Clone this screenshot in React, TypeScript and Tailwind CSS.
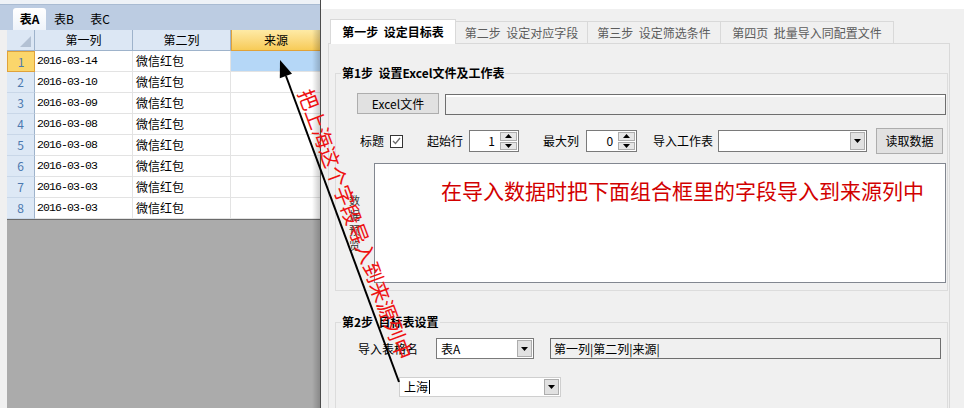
import { Fragment } from "react";

const DATES = [
  "2016-03-14",
  "2016-03-10",
  "2016-03-09",
  "2016-03-08",
  "2016-03-08",
  "2016-03-03",
  "2016-03-03",
  "2016-03-03",
];

function DownArrow() {
  return (
    <svg width="7" height="4" viewBox="0 0 7 4">
      <path d="M0 0h7L3.5 4z" fill="#000" />
    </svg>
  );
}

function UpArrow() {
  return (
    <svg width="7" height="4" viewBox="0 0 7 4">
      <path d="M0 4h7L3.5 0z" fill="#000" />
    </svg>
  );
}

function Combo({
  value,
  caret,
  className,
}: {
  value?: string;
  caret?: boolean;
  className: string;
}) {
  return (
    <div className={`flex shrink-0 bg-white ${className}`}>
      <div className="flex flex-1 items-center pl-[4px]">
        {value}
        {caret && <span className="ml-px h-[14px] w-px bg-black" />}
      </div>
      <div className="my-px mr-px flex w-[15px] items-center justify-center border border-[#adadad] bg-[#e1e1e1]">
        <DownArrow />
      </div>
    </div>
  );
}

function Spinner({ value, className }: { value: string; className: string }) {
  return (
    <div
      className={`flex h-[22px] shrink-0 border border-[#7a7a7a] bg-white ${className}`}
    >
      <div className="flex flex-1 items-center justify-end pr-[5px]">{value}</div>
      <div className="flex w-[18px] flex-col gap-px py-px pr-px">
        <div className="flex flex-1 items-center justify-center border border-[#adadad] bg-[#e6e6e6]">
          <UpArrow />
        </div>
        <div className="flex flex-1 items-center justify-center border border-[#adadad] bg-[#e6e6e6]">
          <DownArrow />
        </div>
      </div>
    </div>
  );
}

function Checkbox({ className }: { className: string }) {
  return (
    <div
      className={`flex h-[13px] w-[13px] shrink-0 items-center justify-center border border-[#333] bg-white ${className}`}
    >
      <svg width="9" height="8" viewBox="0 0 9 8">
        <path d="M1 4l2.5 2.5L8 1" fill="none" stroke="#6b6b6b" strokeWidth="1.3" />
      </svg>
    </div>
  );
}

function SheetPanel() {
  return (
    <div className="relative flex w-[320px] shrink-0 flex-col bg-[#f0f0f0]">
      <div className="h-[4px] bg-[#eef2f7]" />
      <div className="flex h-[26px] items-end border-t border-[#a9bbd2] bg-[#bccce2] pl-[13px]">
        <div className="flex h-[22px] w-[33px] items-center justify-center rounded-t-[3px] bg-linear-to-b from-white to-[#eef3fa] font-bold">
          表A
        </div>
        <div className="flex h-[22px] w-[36px] items-center justify-center">表B</div>
        <div className="flex h-[22px] w-[36px] items-center justify-center">表C</div>
      </div>
      <div className="flex flex-1">
        <div className="w-[7px] bg-[#f0f0f0]" />
        <div className="flex flex-1 flex-col">
          <div className="grid grid-cols-[28px_98px_98px_89px] auto-rows-[21px]">
            <div className="relative border-r border-b border-[#9eb3cb] bg-[#dce7f4]">
              <svg className="absolute right-[3px] bottom-[3px]" width="11" height="11" viewBox="0 0 11 11">
                <path d="M11 0V11H0z" fill="#b3c1d3" />
              </svg>
            </div>
            <div className="flex items-center justify-center border-r border-b border-[#9eb3cb] bg-[#dce7f4]">
              第一列
            </div>
            <div className="flex items-center justify-center border-r border-b border-[#9eb3cb] bg-[#dce7f4]">
              第二列
            </div>
            <div className="flex items-center justify-center border-b border-l border-[#e0a23a] bg-linear-to-b from-[#feeaa5] to-[#f7cb56]">
              来源
            </div>
            {DATES.map((d, i) => (
              <Fragment key={i}>
                <div
                  className={
                    i === 0
                      ? "flex items-center justify-center border border-[#e0a23a] bg-[#fbd66b] text-[#4c79b0]"
                      : "flex items-center justify-center border-r border-b border-r-[#9eb3cb] border-b-[#c9d7e8] bg-[#dde8f5] text-[#4c79b0]"
                  }
                >
                  {i + 1}
                </div>
                <div className="flex items-center border-r border-b border-[#e3e3e3] bg-white pl-[2px] font-['Liberation_Mono',monospace] text-[11.5px] tracking-[-0.9px]">
                  {d}
                </div>
                <div className="flex items-center border-r border-b border-[#e3e3e3] bg-white pl-[3px]">
                  微信红包
                </div>
                <div
                  className={
                    i === 0
                      ? "border-b border-[#e3e3e3] bg-[#b5d7f7]"
                      : "border-b border-[#e3e3e3] bg-white"
                  }
                />
              </Fragment>
            ))}
          </div>
          <div className="flex-1 border-t border-[#6a6a6a] bg-[#ababab]" />
        </div>
      </div>
      <div className="pointer-events-none absolute top-[30px] right-0 bottom-0 w-[8px] bg-linear-to-r from-transparent to-black/20" />
    </div>
  );
}

function ImportWindow() {
  return (
    <div className="flex h-[408px] flex-1 flex-col border-l border-[#4b4b4b] bg-[#f0f0f0]">
      <div className="h-[9px] shrink-0 bg-white" />
      <div className="flex flex-col pt-[10px] pr-[14px] pl-[7px]">
        <div className="flex h-[24px] items-end pl-[2px]">
          <div className="relative z-10 -mb-px flex h-[25px] w-[126px] items-center justify-center border border-b-0 border-[#d9d9d9] bg-white font-bold">
            第一步&nbsp; 设定目标表
          </div>
          <div className="flex h-[22px] w-[132px] items-center justify-center border border-b-0 border-l-0 border-[#d9d9d9] text-[#5c5c5c]">
            第二步&nbsp; 设定对应字段
          </div>
          <div className="flex h-[22px] w-[133px] items-center justify-center border border-b-0 border-l-0 border-[#d9d9d9] text-[#5c5c5c]">
            第三步&nbsp; 设定筛选条件
          </div>
          <div className="flex h-[22px] w-[173px] items-center justify-center border border-b-0 border-l-0 border-[#d9d9d9] text-[#5c5c5c]">
            第四页&nbsp; 批量导入同配置文件
          </div>
        </div>

        <div className="h-[420px] shrink-0 border border-[#d9d9d9] pt-[21px] pr-px pl-[6px]">
          <fieldset className="border border-[#dcdcdc]">
            <legend className="ml-[5px] px-px leading-[16px] font-bold">
              第1步&nbsp; 设置Excel文件及工作表
            </legend>
            <div className="flex flex-col pt-[12px] pr-px pb-[7px] pl-[13px]">
              <div className="flex h-[22px] items-start">
                <button
                  type="button"
                  className="ml-[8px] h-[21px] w-[82px] border border-[#adadad] bg-[#e1e1e1]"
                >
                  Excel文件
                </button>
                <div className="mt-px ml-[6px] h-[21px] flex-1 border border-[#6e6e6e] bg-[#f0f0f0] shadow-[inset_0_2px_0_#fff]" />
              </div>

              <div className="mt-[13px] flex h-[26px] items-center">
                <span className="ml-[11px]">标题</span>
                <Checkbox className="ml-[6px]" />
                <span className="ml-[24px]">起始行</span>
                <Spinner value="1" className="ml-[6px] w-[50px]" />
                <span className="ml-[24px]">最大列</span>
                <Spinner value="0" className="ml-[7px] w-[51px]" />
                <span className="ml-[16px]">导入工作表</span>
                <Combo className="ml-[5px] h-[22px] w-[149px] border border-[#7a7a7a]" />
                <button
                  type="button"
                  className="ml-[9px] h-[26px] w-[67px] border border-[#adadad] bg-[#e1e1e1]"
                >
                  读取数据
                </button>
              </div>

              <div className="mt-[9px] flex">
                <div className="flex w-[12px] flex-col self-center text-[11px] leading-[15px] text-[#333]">
                  <span>数</span>
                  <span>据</span>
                  <span>预</span>
                  <span>览</span>
                </div>
                <div className="ml-[13px] h-[120px] flex-1 overflow-hidden border border-[#828790] bg-white pt-[16px] pl-[66px] text-[21px] leading-none whitespace-nowrap text-[#d20000]">
                  在导入数据时把下面组合框里的字段导入到来源列中
                </div>
              </div>
            </div>
          </fieldset>

          <fieldset className="mt-[23px] h-[200px] border border-[#dcdcdc]">
            <legend className="ml-[5px] px-px leading-[16px] font-bold">
              第2步&nbsp; 目标表设置
            </legend>
            <div className="flex flex-col pt-[8px] pl-[13px]">
              <div className="flex h-[21px] items-center">
                <span className="ml-[9px]">导入表格名</span>
                <Combo value="表A" className="ml-[18px] h-[21px] w-[98px] border border-[#7a7a7a]" />
                <div className="ml-[16px] flex h-[21px] w-[391px] items-center border border-[#6e6e6e] bg-[#f0f0f0] pl-[3px]">
                  第一列|第二列|来源|
                </div>
              </div>
              <Combo
                value="上海"
                caret
                className="mt-[18px] ml-[50px] h-[20px] w-[162px] border border-[#cfcfcf]"
              />
            </div>
          </fieldset>
        </div>
      </div>
    </div>
  );
}

export default function App() {
  return (
    <div className="relative flex h-[408px] w-[964px] overflow-hidden bg-[#f0f0f0] font-['Noto_Sans_CJK_SC','Noto_Sans',sans-serif] text-[12px] leading-none text-black">
      <SheetPanel />
      <ImportWindow />

      {/* annotation drawn over the screenshot */}
      <svg
        className="pointer-events-none absolute top-0 left-0"
        width="964"
        height="408"
        viewBox="0 0 964 408"
      >
        <line x1="399" y1="382" x2="286" y2="76" stroke="#000" strokeWidth="2" />
        <polygon points="280,60 292,73.7 279.8,78.2" fill="#000" />
      </svg>
      <div className="pointer-events-none absolute top-[224px] left-[356px] -translate-x-1/2 -translate-y-1/2 rotate-[69.5deg] text-[20.5px] leading-none whitespace-nowrap text-[#ee1111]">
        把上海这个字段导入到来源列中
      </div>
    </div>
  );
}
